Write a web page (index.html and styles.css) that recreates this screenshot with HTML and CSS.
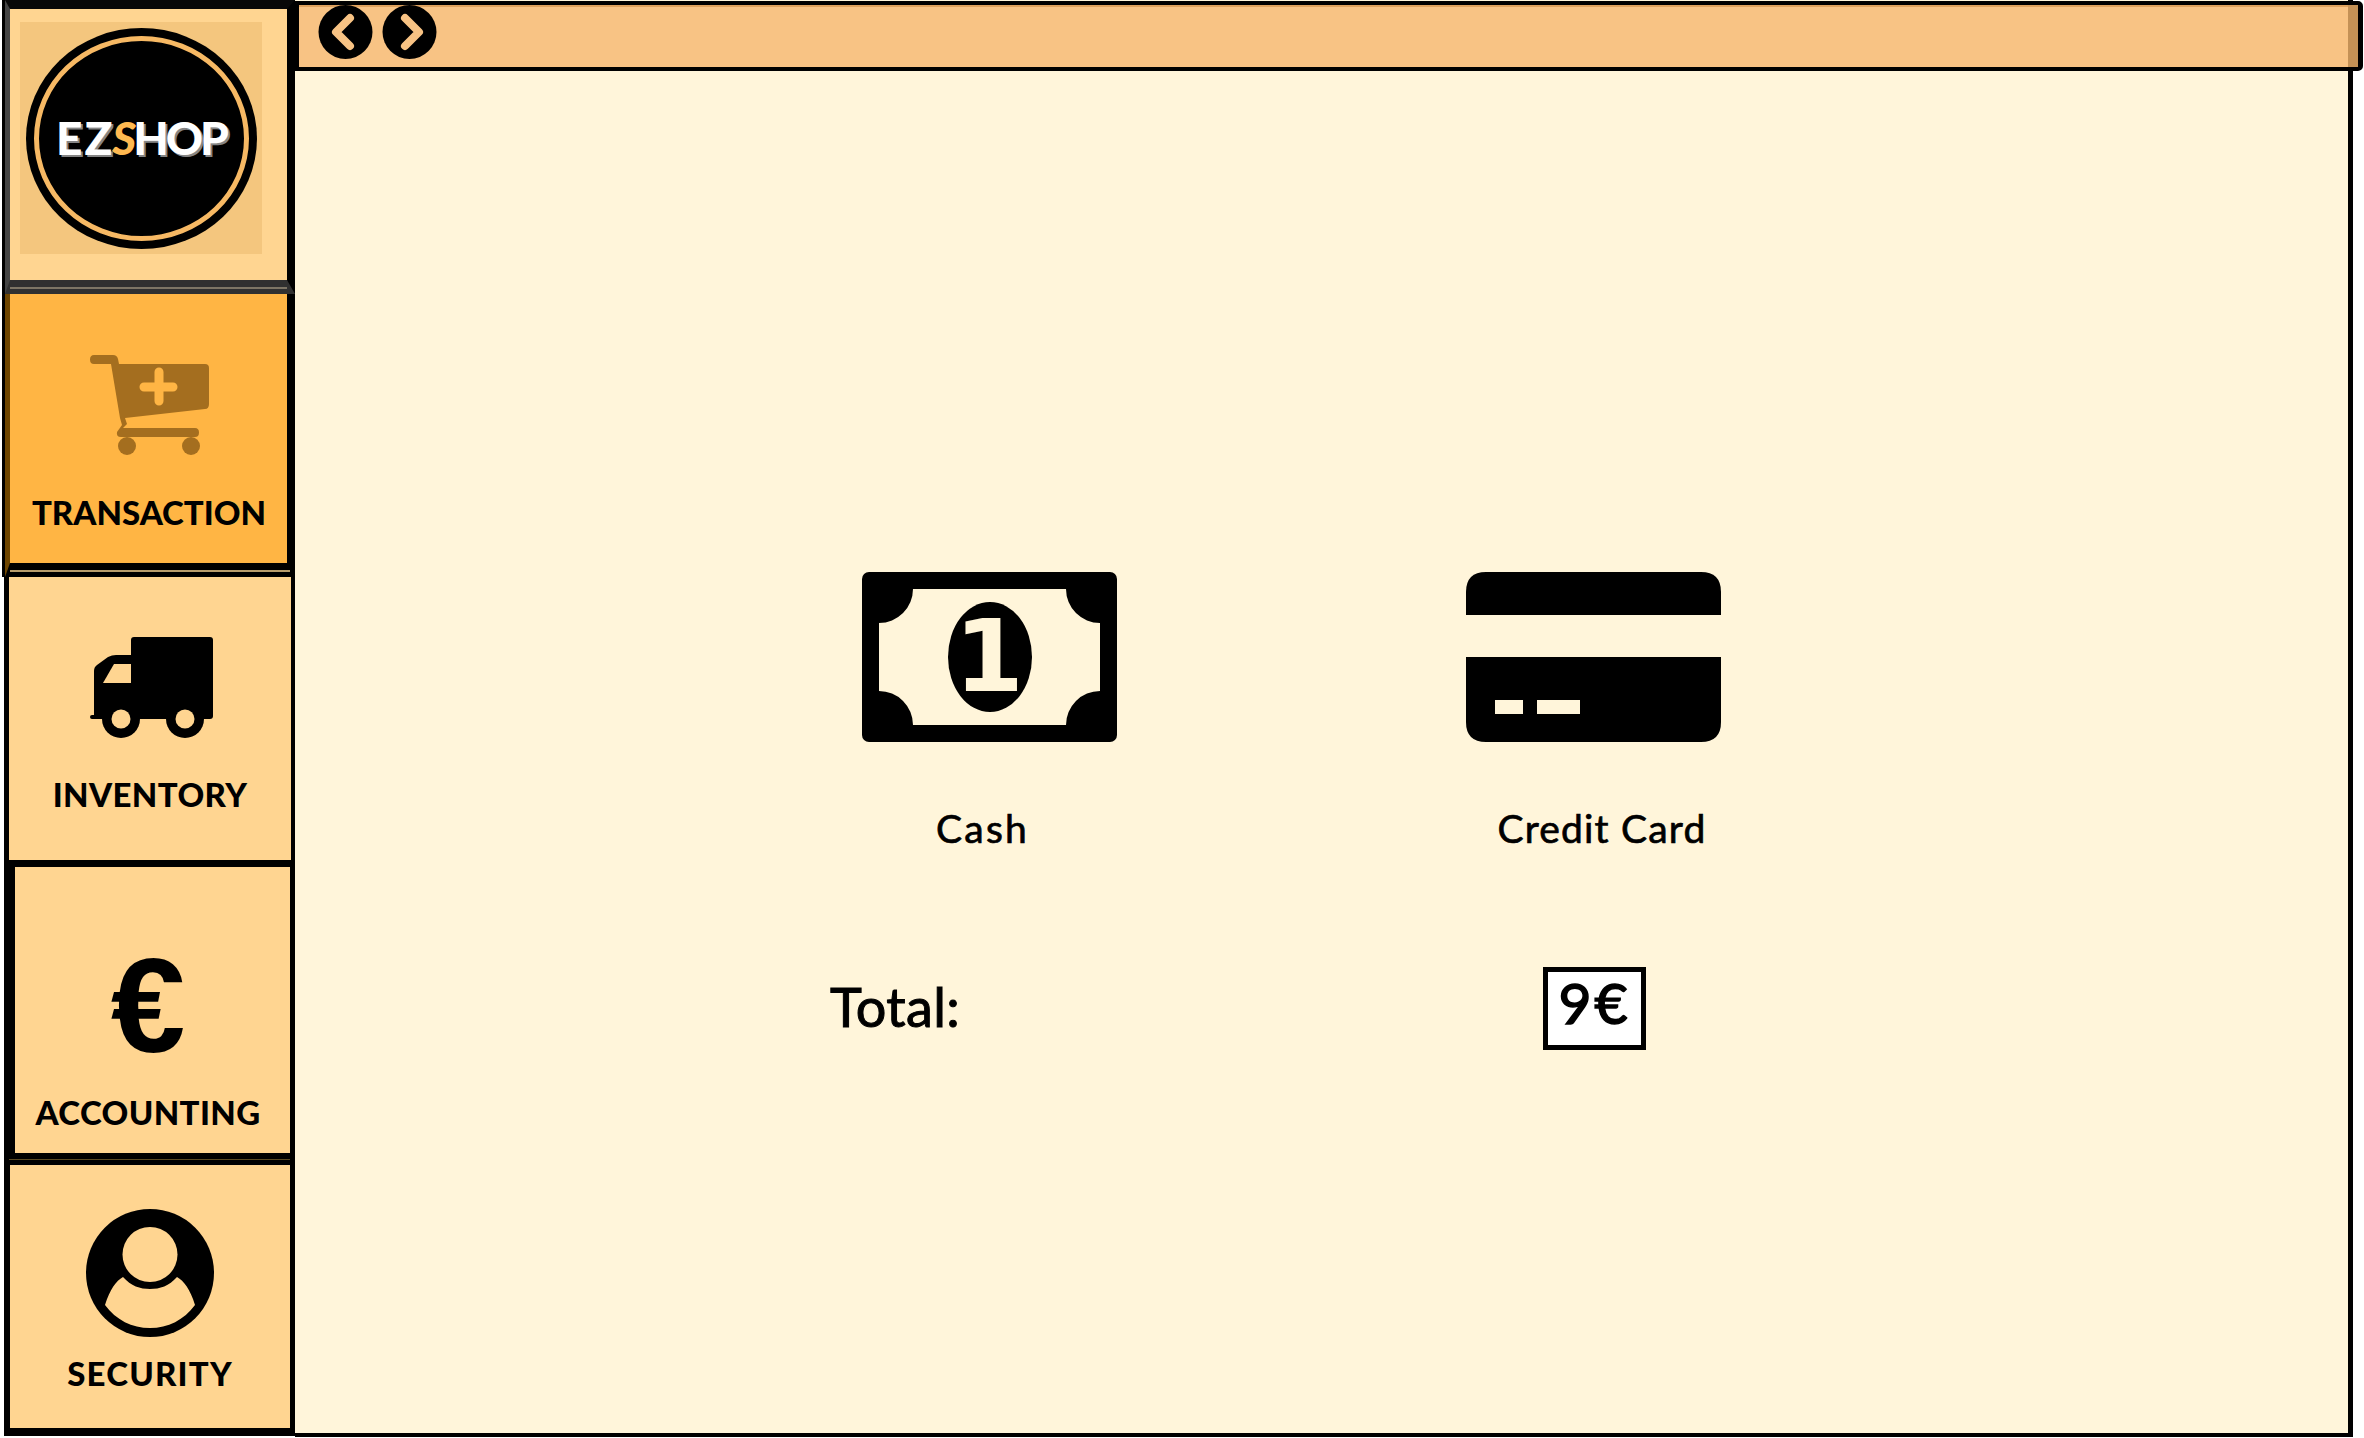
FILE: index.html
```html
<!DOCTYPE html>
<html lang="en">
<head>
<meta charset="utf-8">
<title>EZShop</title>
<link rel="stylesheet" href="styles.css">
</head>
<body>
<div class="app">
  <nav class="sidebar">
    <div class="tile tile-logo">
      <div class="logo-bg">
        <div class="logo-ring">
          <div class="logo-inner"><span class="logo-text">E<span class="logo-z">Z</span><span class="logo-s">S</span>HOP</span></div>
        </div>
      </div>
    </div>
    <div class="tile tile-transaction">
      <svg class="icon-cart" viewBox="0 0 120 100" width="120" height="100">
        <path class="cart-fill" d="M4 0H23q4 0 5 4L29 9H115q4 0 4 4V49q0 5-4 5L35 63l2 6-4 4H105q4 0 4 4.500t-4 4.500H31q-5 0-4-5l5-7-2-7L21 9H4q-4 0-4-4.500T4 0z"/>
        <circle class="cart-fill" cx="37" cy="91" r="9"/>
        <circle class="cart-fill" cx="101" cy="91" r="9"/>
        <path class="cart-plus" d="M69 17V46M54 32H83"/>
      </svg>
      <span class="label label-transaction">TRANSACTION</span>
    </div>
    <div class="tile tile-inventory">
      <svg class="icon-truck" viewBox="0 0 123 101" width="123" height="101">
        <rect x="41" y="0" width="82" height="82" rx="3"/>
        <path d="M42 18H26Q22 18 18 20L7 28Q4 30 4 34V78H2Q0 78 0 80T2 82H42z"/>
        <path class="truck-hole" d="M41 27H24L13 46H41z"/>
        <circle cx="31" cy="82" r="19"/>
        <circle cx="95" cy="82" r="19"/>
        <circle class="truck-hole" cx="31" cy="82" r="9.500"/>
        <circle class="truck-hole" cx="95" cy="82" r="9.500"/>
      </svg>
      <span class="label label-inventory">INVENTORY</span>
    </div>
    <div class="tile tile-accounting">
      <span class="icon-euro">€</span>
      <span class="label label-accounting">ACCOUNTING</span>
    </div>
    <div class="tile tile-security">
      <svg class="icon-user" viewBox="0 0 128 128" width="128" height="128">
        <circle cx="64" cy="64" r="64"/>
        <circle class="user-hole" cx="64" cy="45.500" r="27.500"/>
        <path class="user-hole" d="M19 96C24 80 30 72 37 68C45 77 54 80 64 80C74 80 83 77 91 68C98 72 104 80 109 96C98 111 82 119 64 119C46 119 30 111 19 96z"/>
      </svg>
      <span class="label label-security">SECURITY</span>
    </div>
  </nav>
  <main class="main">
    <header class="topbar">
      <svg class="nav-btn" viewBox="0 0 55 54" width="55" height="54">
        <circle cx="27.500" cy="27" r="27"/>
        <path class="nav-chevron" d="M32 13L18 27L32 41"/>
      </svg>
      <svg class="nav-btn" viewBox="0 0 55 54" width="55" height="54">
        <circle cx="27.500" cy="27" r="27"/>
        <path class="nav-chevron" d="M23 13L37 27L23 41"/>
      </svg>
    </header>
    <section class="content">
      <div class="pay-row">
        <div class="pay-option">
          <svg class="pay-icon" viewBox="0 0 255 170" width="255" height="170">
            <rect width="255" height="170" rx="7"/>
            <path class="pay-hole" d="M51 17H204A34 34 0 0 0 238 51V119A34 34 0 0 0 204 153H51A34 34 0 0 0 17 119V51A34 34 0 0 0 51 17z"/>
            <ellipse cx="128" cy="85" rx="42" ry="55"/>
            <text class="cash-digit" x="127" y="119" text-anchor="middle">1</text>
          </svg>
          <span class="pay-label pay-label-cash">Cash</span>
        </div>
        <div class="pay-option">
          <svg class="pay-icon" viewBox="0 0 255 170" width="255" height="170">
            <path d="M20 0H235Q255 0 255 20V43H0V20Q0 0 20 0z"/>
            <path d="M0 85H255V150Q255 170 235 170H20Q0 170 0 150z"/>
            <rect class="pay-hole" x="29" y="128" width="28" height="14"/>
            <rect class="pay-hole" x="71" y="128" width="43" height="14"/>
          </svg>
          <span class="pay-label pay-label-card">Credit Card</span>
        </div>
      </div>
      <div class="total-row">
        <span class="total-label">Total:</span>
        <span class="total-value">9€</span>
      </div>
    </section>
  </main>
</div>
</body>
</html>
```
FILE: styles.css
```css
html, body {
  margin: 0;
  padding: 0;
  background: #fff;
}

.app {
  display: flex;
  width: 2364px;
  height: 1438px;
  padding-left: 5px;
  box-sizing: border-box;
  overflow: hidden;
  font-family: "Lato", "Liberation Sans", sans-serif;
  color: #000;
}

/* Sidebar */
.sidebar {
  display: flex;
  flex-direction: column;
  width: 290px;
  flex: none;
  box-sizing: border-box;
}

.tile {
  position: relative;
  display: flex;
  flex-direction: column;
  align-items: center;
  box-sizing: border-box;
  border-style: solid;
  border-color: #000;
  background: #ffd591;
  flex: none;
}

/* Hand-drawn double strokes that run over the tile borders */
.tile-logo::after,
.tile-transaction::after,
.tile-accounting::after {
  content: "";
  position: absolute;
  height: 2px;
}

.tile-logo {
  height: 294px;
  border-width: 9px 8px 14px 5px;
  border-color: #080808 #000 #303030 #444;
  box-shadow: -3px 0 0 #000;
}

.tile-logo::after {
  left: 0;
  right: 0;
  bottom: -9px;
  background: #7d7565;
}

.logo-bg {
  align-self: flex-start;
  display: flex;
  align-items: center;
  justify-content: center;
  width: 242px;
  height: 232px;
  margin: 13px 0 0 10px;
  background: #f4c67e;
}

.logo-ring {
  box-sizing: border-box;
  width: 231px;
  height: 221px;
  padding: 8px;
  border-radius: 50%;
  background: #000;
}

.logo-inner {
  box-sizing: border-box;
  display: flex;
  align-items: center;
  justify-content: center;
  width: 100%;
  height: 100%;
  border: 5px solid #f7b964;
  border-radius: 50%;
  background: #000;
}

.logo-text {
  font-family: "Lato", sans-serif;
  font-weight: 900;
  font-size: 46px;
  line-height: 1;
  color: #fff;
  letter-spacing: -3px;
  text-shadow: 2px 2px 0 #858585;
}

.logo-z {
  margin-left: 5px;
  margin-right: 3px;
}

.logo-s {
  color: #ffb950;
  font-style: italic;
  text-shadow: none;
}

.tile-transaction {
  height: 283px;
  padding-top: 61px;
  border-width: 0 8px 14px 5px;
  border-left-color: #6e4500;
  background: #ffb544;
  box-shadow: -3px 0 0 #000;
}

.tile-transaction::after {
  left: 0;
  right: -3px;
  bottom: -9px;
  background: #b89d6c;
}

.tile-inventory {
  height: 290px;
  margin-left: -1px;
  padding-top: 60px;
  border-width: 0 4px 7px 5px;
}

.tile-accounting {
  height: 298px;
  margin-left: -1px;
  padding-top: 90px;
  padding-right: 9px;
  border-width: 0 5px 12px 11px;
}

.tile-accounting::after {
  left: -6px;
  right: 0;
  bottom: -7px;
  height: 1px;
  background: #5c4a22;
}

.tile-security {
  height: 271px;
  margin-left: -1px;
  padding-top: 44px;
  border-width: 0 5px 8px 6px;
}

.label {
  font-family: "Lato", sans-serif;
  font-weight: 900;
  font-size: 33px;
  line-height: 34px;
  white-space: nowrap;
}

.label-transaction { margin-top: 40px; margin-left: 1px; }
.label-inventory { margin-top: 39px; letter-spacing: 0.4px; }
.label-accounting { margin-top: 37px; letter-spacing: 0.4px; }
.label-security { margin-top: 19px; letter-spacing: 1.200px; }

.cart-fill { fill: #a46e1f; }
.cart-plus {
  fill: none;
  stroke: #ffb544;
  stroke-width: 9;
  stroke-linecap: round;
}

.truck-hole { fill: #ffd591; }
.user-hole { fill: #ffd591; }

.icon-cart, .icon-truck, .icon-user, .pay-icon, .nav-btn {
  display: block;
  flex: none;
}

.icon-cart { margin-left: 2px; }
.icon-truck { margin-left: 3px; }

.icon-euro {
  display: block;
  height: 101px;
  font-family: "Liberation Sans", sans-serif;
  font-weight: 700;
  font-size: 134px;
  line-height: 98px;
}

/* Main */
.main {
  display: flex;
  flex-direction: column;
  width: 2058px;
  height: 1437px;
  flex: none;
  box-sizing: border-box;
  border-right: 5px solid #000;
  border-bottom: 4px solid #000;
  background: #fff5da;
}

.topbar {
  display: flex;
  align-items: flex-start;
  gap: 9px;
  box-sizing: border-box;
  height: 70px;
  margin: 1px -15px 0 0;
  padding-left: 19px;
  border: solid #000;
  border-width: 4px 5px 4px 4px;
  border-radius: 0 5px 5px 0;
  background: #f8c384;
  box-shadow: inset -10px 0 0 #c49156, inset 0 2px 0 #dfa25e;
  flex: none;
}

.nav-chevron {
  fill: none;
  stroke: #f8c384;
  stroke-width: 8;
  stroke-linecap: round;
  stroke-linejoin: round;
}

.content {
  display: flex;
  flex-direction: column;
}

.pay-row {
  display: flex;
  gap: 349px;
  padding: 501px 0 0 567px;
}

.pay-option {
  display: flex;
  flex-direction: column;
  align-items: center;
  width: 255px;
}

.pay-hole { fill: #fff5da; }

.cash-digit {
  font-family: "DejaVu Sans", sans-serif;
  font-weight: 700;
  font-size: 100px;
  fill: #fff5da;
}

.pay-label {
  margin-top: 63px;
  font-size: 39px;
  line-height: 46px;
  white-space: nowrap;
  letter-spacing: 1.200px;
  -webkit-text-stroke: 0.7px #000;
}

.pay-label-cash { margin-right: 14px; letter-spacing: 2.200px; }
.pay-label-card { margin-left: 17px; }

.total-row {
  display: flex;
  align-items: flex-start;
  padding: 116px 0 0 535px;
}

.total-label {
  width: 713px;
  margin-top: 8px;
  font-size: 54px;
  line-height: 64px;
  letter-spacing: 0.4px;
  -webkit-text-stroke: 1px #000;
}

.total-value {
  box-sizing: border-box;
  width: 103px;
  height: 83px;
  border: 5px solid #000;
  background: #fff;
  text-align: center;
  font-size: 57px;
  line-height: 60px;
  letter-spacing: 3px;
  -webkit-text-stroke: 1.500px #000;
}
```
